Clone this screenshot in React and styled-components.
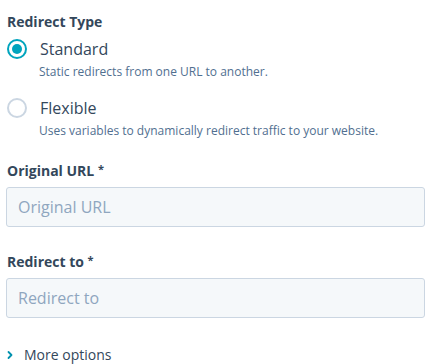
import React, { useState } from 'react'
import styled, { createGlobalStyle } from 'styled-components';

const GlobalStyle = createGlobalStyle`
    body {
        margin: 0;
        background: #fff;
        font-family: "Open Sans", "Liberation Sans", sans-serif;
        color: #33475b;
    }
`

const options = [
    { id: 'standard', title: 'Standard', desc: 'Static redirects from one URL to another.' },
    { id: 'flexible', title: 'Flexible', desc: 'Uses variables to dynamically redirect traffic to your website.' },
]

export default function App() {
    const [type, setType] = useState('standard');

    return (
        <>
            <GlobalStyle />
            <Form>
                <Label>Redirect Type</Label>
                {options.map((opt, i) => (
                    <Option key={opt.id} first={i === 0}>
                        <RadioRow onClick={() => setType(opt.id)}>
                            <Radio checked={type === opt.id} />
                            <RadioTitle>{opt.title}</RadioTitle>
                        </RadioRow>
                        <Help>{opt.desc}</Help>
                    </Option>
                ))}

                <Field>
                    <Label>Original URL <Req>*</Req></Label>
                    <Input placeholder="Original URL" />
                </Field>

                <Field>
                    <Label>Redirect to <Req>*</Req></Label>
                    <Input placeholder="Redirect to" />
                </Field>

                <More>
                    <svg width="8" height="10" viewBox="0 0 8 10">
                        <path d="M2.5 2 L5.5 5 L2.5 8" fill="none" stroke="#0091ae" strokeWidth="1.8" strokeLinecap="round" strokeLinejoin="round" />
                    </svg>
                    More options
                </More>
            </Form>
        </>
    )
}

const Form = styled.div`
    display: flex;
    flex-direction: column;
    padding: 13px 11px 0 6px;
`

const Label = styled.div`
    font-size: 14px;
    font-weight: 700;
    line-height: 18px;
    color: #33475b;
    padding-left: 1px;
`

const Req = styled.span`
    font-size: 11px;
    vertical-align: top;
    line-height: 14px;
`

const Option = styled.div`
    display: flex;
    flex-direction: column;
    margin-top: ${p => p.first ? '8px' : '17px'};
`

const RadioRow = styled.label`
    display: flex;
    align-items: center;
    gap: 13px;
    height: 20px;
    padding-left: 1px;
    cursor: pointer;
`

const Radio = styled.span`
    box-sizing: border-box;
    width: 20px;
    height: 20px;
    border-radius: 50%;
    border: 2px solid ${p => p.checked ? '#00a4bd' : '#cbd6e2'};
    display: flex;
    align-items: center;
    justify-content: center;
    background: #fff;

    &::after {
        content: '';
        width: 10px;
        height: 10px;
        border-radius: 50%;
        background: #00a4bd;
        display: ${p => p.checked ? 'block' : 'none'};
    }
`

const RadioTitle = styled.span`
    font-size: 16px;
    line-height: 20px;
    color: #33475b;
`

const Help = styled.div`
    margin-top: 4px;
    padding-left: 33px;
    font-size: 12px;
    line-height: 18px;
    color: #516f90;
`

const Field = styled.div`
    display: flex;
    flex-direction: column;
    gap: 7px;
    margin-top: 22px;

    & + & {
        margin-top: 26px;
    }
`

const Input = styled.input`
    box-sizing: border-box;
    width: 419px;
    height: 40px;
    padding: 0 11px;
    border: 1px solid #cbd6e2;
    border-radius: 3px;
    background: #f5f8fa;
    font-family: inherit;
    font-size: 16px;
    color: #33475b;
    outline: none;

    &::placeholder {
        color: #8fa6bf;
    }
`

const More = styled.div`
    display: flex;
    align-items: center;
    gap: 10px;
    margin-top: 27px;
    font-size: 14px;
    line-height: 20px;
    color: #33475b;
`
